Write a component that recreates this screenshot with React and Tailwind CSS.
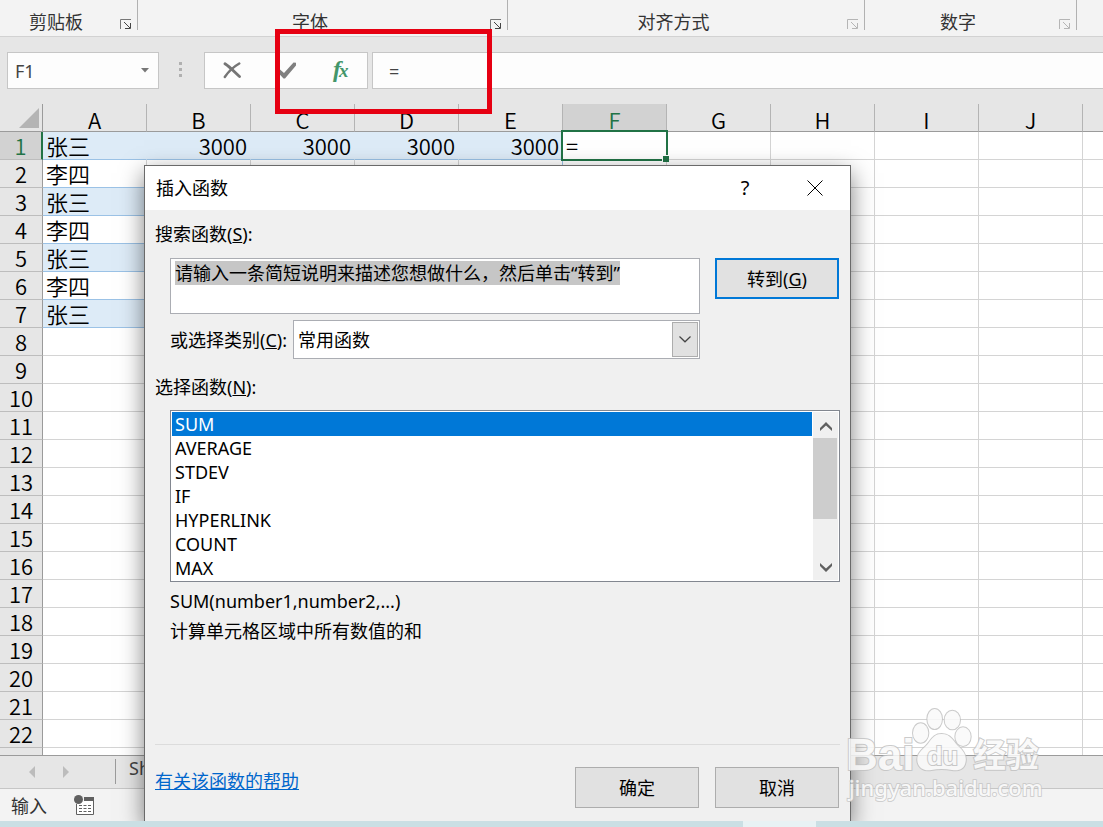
import React, { useEffect, useRef, useState } from 'react';

const columns = ['A', 'B', 'C', 'D', 'E', 'F', 'G', 'H', 'I', 'J'];
const rowNumbers = Array.from({ length: 23 }, (_, i) => i + 1);

const cells = {
  A1: '张三', B1: '3000', C1: '3000', D1: '3000', E1: '3000', F1: '=',
  A2: '李四',
  A3: '张三',
  A4: '李四',
  A5: '张三',
  A6: '李四',
  A7: '张三',
};

const functionNames = ['SUM', 'AVERAGE', 'STDEV', 'IF', 'HYPERLINK', 'COUNT', 'MAX'];

const ribbonGroups = [
  { name: '剪贴板', width: 'w-[138px]', enabled: true },
  { name: '字体', width: 'w-[370px]', enabled: true },
  { name: '对齐方式', width: 'w-[357px]', enabled: false },
  { name: '数字', width: 'w-[212px]', enabled: false },
];

function LauncherIcon({ enabled }) {
  return (
    <svg width="12" height="11" viewBox="0 0 12 11" fill="none" stroke={enabled ? '#444' : '#b5b5b5'}>
      <path d="M0.5 10V0.5H11" stroke={enabled ? '#777' : '#b5b5b5'} />
      <path d="M4 3L10 9M10.5 4V9.5H5" />
    </svg>
  );
}

function Ribbon() {
  return (
    <div className="flex h-[37px] shrink-0 border-b border-[#d2d2d2] bg-[#f3f3f3] text-[#333]">
      {ribbonGroups.map((g) => (
        <div key={g.name} className={`flex shrink-0 ${g.width}`}>
          <div className="flex min-w-0 flex-1 items-center pt-2">
            <span className="flex-1 text-center">{g.name}</span>
            <button aria-label={`${g.name}设置`} className="flex w-[25px] pt-1 pl-2">
              <LauncherIcon enabled={g.enabled} />
            </button>
          </div>
          <div className="h-[30px] w-px bg-[#b1b1b1]" />
        </div>
      ))}
    </div>
  );
}

function FormulaBar() {
  return (
    <div className="flex h-[67px] shrink-0 items-start bg-[#e6e6e6] pt-[15px] pl-[7px] text-[#444]">
      <div className="flex h-[37px] w-[152px] shrink-0 items-center border border-[#c6c6c6] bg-[#fdfdfd]">
        <input aria-label="名称框" defaultValue="F1" className="w-full min-w-0 flex-1 bg-transparent pl-[7px] outline-none" />
        <button aria-label="名称列表" className="px-[9px]">
          <svg width="8" height="5" viewBox="0 0 8 5" fill="#777">
            <path d="M0 0H8L4 4.5Z" />
          </svg>
        </button>
      </div>
      <div className="mt-[10px] mr-[22px] ml-5 flex shrink-0 flex-col gap-[3px]">
        <span className="size-[3px] bg-[#b0b0b0]" />
        <span className="size-[3px] bg-[#b0b0b0]" />
        <span className="size-[3px] bg-[#b0b0b0]" />
      </div>
      <div className="mr-1 flex h-[37px] w-[164px] shrink-0 border border-[#c6c6c6] bg-[#fdfdfd]">
        <button aria-label="取消输入" className="flex flex-1 items-center justify-center">
          <svg width="18" height="17" viewBox="0 0 18 17" fill="none" stroke="#757575" strokeLinecap="round">
            <path d="M2 1.8C7 5 12 10.5 16.5 14.5" strokeWidth="2.8" />
            <path d="M16.3 1.5C11 4.5 5.5 9.5 1.8 15" strokeWidth="2.4" />
          </svg>
        </button>
        <button aria-label="确认输入" className="flex flex-1 items-center justify-center">
          <svg width="20" height="17" viewBox="0 0 20 17" fill="#808080">
            <path d="M1 9.5L4 7.5L8 11L17.5 0.5L20 0.8V3.5L9 16.5H7.5Z" />
          </svg>
        </button>
        <button aria-label="插入函数" className="flex flex-1 items-center justify-center">
          <svg className="overflow-visible" width="22" height="24" viewBox="0 0 22 24" fill="#43966a" fontFamily="Liberation Serif, serif" fontStyle="italic" fontWeight="bold">
            <text x="4" y="18" fontSize="24">f</text>
            <text x="10" y="18" fontSize="19">x</text>
          </svg>
        </button>
      </div>
      <input
        aria-label="编辑栏"
        defaultValue="="
        className="h-[37px] min-w-0 flex-1 border border-r-0 border-[#c6c6c6] bg-[#fdfdfd] pl-4 outline-none"
      />
    </div>
  );
}

function cellClass(col, row) {
  const inList = row <= 7 && col <= 4;
  let cls = 'relative border-r border-b p-0 px-[3px] whitespace-nowrap';
  if (inList) {
    cls += ' border-b-[#9bc2e6]';
    if (col === 4) cls += ' border-r-[#9bc2e6]';
    else cls += row % 2 ? ' border-r-[#ddebf7]' : ' border-r-[#d4d4d4]';
    if (row % 2) cls += ' bg-[#ddebf7]';
  } else {
    cls += ' border-[#d4d4d4]';
  }
  return cls + (col > 0 && col < 5 ? ' text-right' : ' text-left');
}

function Sheet() {
  return (
    <div className="min-h-0 flex-1 overflow-hidden border-b border-[#9b9b9b] bg-white">
      <table className="w-full table-fixed border-separate border-spacing-0 font-['Noto_Sans_CJK_SC',sans-serif] text-[22px] leading-[27px] font-[350] text-black">
        <colgroup>
          <col className="w-[43px]" />
          {columns.map((c) => <col key={c} className="w-[104px]" />)}
          <col />
        </colgroup>
        <thead>
          <tr className="h-7 bg-[#e6e6e6]">
            <td className="border-r border-b border-[#9b9b9b] p-0">
              <svg className="mr-[3px] ml-auto block" width="20" height="20" viewBox="0 0 20 20" fill="#b4b4b4">
                <path d="M20 0V20H0Z" />
              </svg>
            </td>
            {columns.map((c) => (
              <th
                key={c}
                scope="col"
                className={`border-r border-b border-r-[#b4b4b4] border-b-[#9b9b9b] p-0 pt-1 leading-[23px] font-[350] ${c === 'F' ? 'bg-[#d2d2d2] text-[#217346]' : ''}`}
              >
                {c}
              </th>
            ))}
            <td className="border-b border-[#9b9b9b] p-0" />
          </tr>
        </thead>
        <tbody>
          {rowNumbers.map((r) => (
            <tr key={r} className="h-7">
              <th
                scope="row"
                className={`border-b border-b-[#bdbdbd] p-0 font-[350] ${r === 1 ? 'border-r-2 border-r-[#217346] bg-[#d2d2d2] text-[#217346]' : 'border-r border-r-[#9b9b9b] bg-[#e6e6e6]'}`}
              >
                {r}
              </th>
              {columns.map((c, i) => (
                <td key={c} className={cellClass(i, r)}>
                  {cells[c + r]}
                  {c + r === 'F1' && (
                    <span className="absolute -inset-[2px] z-10 border-2 border-[#217346]">
                      <span className="absolute -right-[3px] -bottom-[3px] size-[7px] border-t border-l border-white bg-[#217346]" />
                    </span>
                  )}
                </td>
              ))}
              <td className="border-b border-[#d4d4d4] p-0" />
            </tr>
          ))}
        </tbody>
      </table>
    </div>
  );
}

function BottomBars() {
  return (
    <>
      <div className="flex h-[33px] shrink-0 items-start border-b border-[#c6c6c6] bg-[#e6e6e6] pl-[29px] text-[#444]">
        <button aria-label="上一个工作表" className="mt-[10px]">
          <svg width="6" height="12" viewBox="0 0 6 12" fill="#bcbcbc"><path d="M6 0V12L0 6Z" /></svg>
        </button>
        <button aria-label="下一个工作表" className="mt-[10px] ml-7">
          <svg width="6" height="12" viewBox="0 0 6 12" fill="#bcbcbc"><path d="M0 0V12L6 6Z" /></svg>
        </button>
        <span className="mt-[3px] ml-[46px] h-[25px] w-px bg-[#9b9b9b]" />
        <button className="ml-[13px] leading-6">Sheet1</button>
      </div>
      <div className="flex h-8 shrink-0 items-center bg-[#f3f3f3] pl-[11px] text-[#333]">
        <span className="pt-[2px]">输入</span>
        <button aria-label="录制宏" className="ml-[27px]">
          <svg width="20" height="20" viewBox="0 0 20 20">
            <path d="M2.5 9V19.5H19.5V3" fill="#fff" stroke="#606060" />
            <path d="M10 2H20V6H10Z" fill="#606060" />
            <path d="M5 10.5H17M5 13.5H17M5 16.5H17" stroke="#606060" strokeDasharray="3 1.5" />
            <circle cx="4.5" cy="4.5" r="4.5" fill="#606060" />
          </svg>
        </button>
      </div>
    </>
  );
}

function InsertFunctionDialog() {
  const [selected, setSelected] = useState('SUM');
  const searchRef = useRef(null);

  useEffect(() => {
    searchRef.current.focus();
    searchRef.current.select();
  }, []);

  return (
    <div
      role="dialog"
      aria-labelledby="dialog-title"
      className="absolute top-[165px] bottom-0 left-[144px] z-20 flex w-[707px] flex-col border border-b-0 border-[#6a6a6a] bg-[#f0f0f0] text-black shadow-[0_8px_22px_rgba(0,0,0,0.5)]"
    >
      <div className="flex h-11 shrink-0 items-center bg-white pl-[11px]">
        <h1 id="dialog-title" className="flex-1">插入函数</h1>
        <button aria-label="帮助" className="w-[70px] text-xl">?</button>
        <button aria-label="关闭" className="flex w-[70px] justify-center">
          <svg width="16" height="16" viewBox="0 0 16 16" stroke="#000">
            <path d="M0.5 0.5L15.5 15.5M15.5 0.5L0.5 15.5" />
          </svg>
        </button>
      </div>

      <div className="flex min-h-0 flex-1 flex-col px-[10px]">
        <label htmlFor="search" className="flex h-12 items-center">搜索函数(<u>S</u>):</label>
        <div className="flex items-start gap-[15px] pl-[15px]">
          <textarea
            id="search"
            ref={searchRef}
            spellCheck={false}
            defaultValue="请输入一条简短说明来描述您想做什么，然后单击“转到”"
            className="h-14 w-[530px] resize-none border border-[#abadb3] bg-white px-1 pt-[2px] leading-6 outline-none selection:bg-[#c6c6c6] selection:text-black"
          />
          <button className="h-[41px] w-[124px] border-2 border-[#0078d7] bg-[#e1e1e1]">转到(<u>G</u>)</button>
        </div>
        <div className="mt-[6px] flex items-center pl-[15px]">
          <label htmlFor="category" className="w-[123px] whitespace-nowrap">或选择类别(<u>C</u>):</label>
          <div className="relative">
            <select id="category" className="block h-[39px] w-[407px] appearance-none border border-[#abadb3] bg-white pl-1 outline-none">
              <option>常用函数</option>
            </select>
            <span className="pointer-events-none absolute top-[2px] right-[2px] bottom-[2px] flex w-[26px] items-center justify-center border border-[#adadad] bg-[#e1e1e1]">
              <svg width="12" height="7" viewBox="0 0 12 7" fill="none" stroke="#444" strokeWidth="1.2">
                <path d="M0.5 0.5L6 5.8L11.5 0.5" />
              </svg>
            </span>
          </div>
        </div>
        <div id="list-label" className="flex h-[51px] items-center pt-1">选择函数(<u>N</u>):</div>
        <div className="ml-[15px] flex border border-[#828790] bg-white p-px">
          <ul role="listbox" aria-labelledby="list-label" className="mr-px flex-1">
            {functionNames.map((name) => (
              <li key={name} role="option" aria-selected={name === selected}>
                <button
                  onClick={() => setSelected(name)}
                  className={`block h-6 w-full pl-[3px] text-left leading-6 ${name === selected ? 'bg-[#0078d7] text-white' : ''}`}
                >
                  {name}
                </button>
              </li>
            ))}
          </ul>
          <div className="flex w-[25px] flex-col bg-[#f0f0f0]">
            <button aria-label="向上滚动" className="flex h-[26px] items-center justify-center pt-[2px]">
              <svg width="12" height="9" viewBox="0 0 12 9" fill="#606060"><path d="M6 0L12 6V9L6 3.5L0 9V6Z" /></svg>
            </button>
            <div className="mr-px h-[81px] bg-[#cdcdcd]" />
            <button aria-label="向下滚动" className="mt-auto flex h-[26px] items-center justify-center">
              <svg width="12" height="9" viewBox="0 0 12 9" fill="#606060"><path d="M6 9L12 3V0L6 5.5L0 0V3Z" /></svg>
            </button>
          </div>
        </div>
        <div className="mt-1 pl-[15px] leading-[30px]">
          <p>SUM(number1,number2,...)</p>
          <p>计算单元格区域中所有数值的和</p>
        </div>
        <div className="mt-auto flex items-start border-t border-[#dcdcdc] pt-[22px] pr-px pb-[13px]">
          <a href="#help" className="flex-1 pt-[2px] text-[#0066cc] underline">有关该函数的帮助</a>
          <button className="mr-4 h-[41px] w-[124px] border border-[#adadad] bg-[#e1e1e1]">确定</button>
          <button className="h-[41px] w-[124px] border border-[#adadad] bg-[#e1e1e1]">取消</button>
        </div>
      </div>
    </div>
  );
}

function Watermark() {
  return (
    <svg
      className="pointer-events-none absolute right-[53px] bottom-[22px] z-30 opacity-85"
      width="210"
      height="100"
      viewBox="120 45 630 300"
      fill="#fafafa"
      stroke="#c2c2c2"
      strokeWidth="6"
      paintOrder="stroke"
    >
      <g fontFamily="Liberation Sans, sans-serif" fontWeight="bold">
        <text x="138" y="240" fontSize="132">Bai</text>
        <ellipse cx="362" cy="129" rx="23" ry="29" />
        <ellipse cx="404" cy="87" rx="22" ry="30" />
        <ellipse cx="457" cy="90" rx="23" ry="28" />
        <ellipse cx="489" cy="140" rx="23" ry="28" />
        <path d="M425 132C452 132 458 152 474 168C490 182 500 196 497 214C494 236 478 244 456 240C436 236 414 236 394 240C372 244 354 234 352 212C350 192 364 182 378 168C394 152 398 132 425 132Z" />
        <text x="381" y="226" fontSize="76">du</text>
      </g>
      <text x="520" y="230" fontSize="98" fontWeight="bold" fontFamily="Noto Sans CJK SC, sans-serif">经验</text>
      <text x="146" y="317" fontSize="66" strokeWidth="5" fontWeight="500" fontFamily="Noto Sans, sans-serif">jingyan.baidu.com</text>
    </svg>
  );
}

export default function App() {
  return (
    <div className="relative flex h-screen flex-col overflow-hidden font-['Noto_Sans','Noto_Sans_CJK_SC',sans-serif] text-lg leading-6">
      <div className="relative flex min-h-0 flex-1 flex-col overflow-hidden">
        <Ribbon />
        <FormulaBar />
        <Sheet />
        <BottomBars />
        <InsertFunctionDialog />
      </div>

      {/* taskbar edge */}
      <div className="flex h-[6px] shrink-0 bg-[#cadfe4]">
        <div className="ml-[743px] w-[73px] bg-[#e8f2f4]" />
      </div>

      {/* highlight around the fx button */}
      <div className="pointer-events-none absolute top-[29px] left-[275px] h-[85px] w-[217px] border-5 border-[#e60012]" />
      <Watermark />
    </div>
  );
}
